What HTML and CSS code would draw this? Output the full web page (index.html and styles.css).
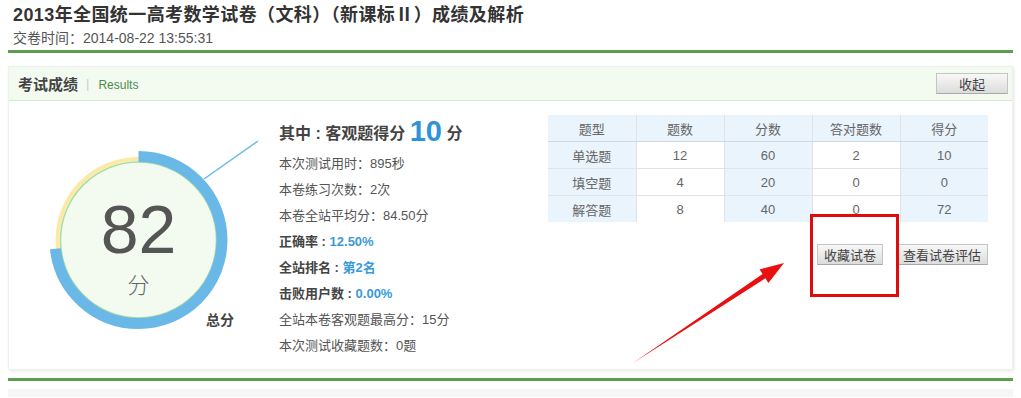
FILE: index.html
```html
<!DOCTYPE html>
<html lang="zh-CN">
<head>
    <meta charset="UTF-8">
    <meta name="viewport" content="width=device-width, initial-scale=1.0">
    <title>成绩及解析</title>
    <link rel="stylesheet" href="styles.css">
</head>
<body>
    <div class="page-head">
        <h1>2013年全国统一高考数学试卷（文科）（新课标Ⅱ）成绩及解析</h1>
        <div class="submit-time">交卷时间：2014-08-22 13:55:31</div>
    </div>

    <div class="panel">
        <div class="panel-title">
            <span class="title-cn">考试成绩</span>
            <span class="title-sep">|</span>
            <span class="title-en">Results</span>
            <button class="btn btn-fold">收起</button>
        </div>

        <div class="panel-body">
            <div class="chart">
                <svg width="262" height="270" viewBox="0 0 262 270">
                    <circle cx="129.5" cy="139" r="81" fill="none" stroke="#fde9a6" stroke-width="4"/>
                    <circle cx="129.5" cy="139" r="78" fill="#f3fbf1" stroke="#a9dea0" stroke-width="1.5"/>
                    <circle cx="129.5" cy="139" r="83.5" fill="none" stroke="#6ab8e8" stroke-width="11"
                            stroke-dasharray="384 600" transform="rotate(-90 129.5 139)"/>
                    <line x1="195" y1="78" x2="249" y2="40" stroke="#6ab8e8" stroke-width="1.5"/>
                </svg>
                <div class="score-num">82</div>
                <div class="score-unit">分</div>
                <div class="score-label">总分</div>
            </div>

            <div class="stats">
                <div class="stats-head">其中 : 客观题得分 <span class="big">10</span> 分</div>
                <div class="stat">本次测试用时：895秒</div>
                <div class="stat">本卷练习次数：2次</div>
                <div class="stat">本卷全站平均分：84.50分</div>
                <div class="stat strong">正确率 : <span class="hl">12.50%</span></div>
                <div class="stat strong">全站排名 : <span class="hl">第2名</span></div>
                <div class="stat strong">击败用户数 : <span class="hl">0.00%</span></div>
                <div class="stat">全站本卷客观题最高分：15分</div>
                <div class="stat">本次测试收藏题数：0题</div>
            </div>

            <div class="summary">
                <table class="score-table">
                    <thead>
                        <tr><th>题型</th><th>题数</th><th>分数</th><th>答对题数</th><th>得分</th></tr>
                    </thead>
                    <tbody>
                        <tr><td>单选题</td><td>12</td><td>60</td><td>2</td><td>10</td></tr>
                        <tr><td>填空题</td><td>4</td><td>20</td><td>0</td><td>0</td></tr>
                        <tr><td>解答题</td><td>8</td><td>40</td><td>0</td><td>72</td></tr>
                    </tbody>
                </table>
                <div class="actions">
                    <button class="btn">收藏试卷</button>
                    <button class="btn">查看试卷评估</button>
                </div>
            </div>
        </div>

        <div class="mark-box"></div>
        <svg class="mark-arrow" width="1005" height="304" viewBox="0 0 1005 304">
            <polygon points="624,296 756.4,211.3 759.4,215.9 775,196 750.6,202.5 753.6,207.1" fill="#e81010"/>
        </svg>
    </div>

    <div class="divider"></div>
    <div class="next-panel"></div>
</body>
</html>
```

FILE: styles.css
```css
body {
    margin: 0;
    padding: 0 8px;
    font-family: "Liberation Sans", "Noto Sans CJK SC", Arial, sans-serif;
    color: #444;
    background: #fff;
    overflow: hidden;
}
.page-head {
    padding: 2px 5px 0;
    border-bottom: 3px solid #5a9e4e;
    height: 48px;
}
.page-head h1 {
    margin: 0;
    font-size: 18px;
    line-height: 26px;
    font-weight: bold;
    letter-spacing: 0.4px;
    color: #333;
}
.submit-time {
    font-size: 14px;
    line-height: 20px;
    color: #555;
}
.panel {
    position: relative;
    margin-top: 13px;
    border: 1px solid #f0f0f0;
    box-shadow: 1px 1px 3px #e6e6e6;
    height: 302px;
}
.panel-title {
    display: flex;
    align-items: center;
    height: 33px;
    padding-left: 9px;
    background: #f3fbf1;
    border-bottom: 1px solid #d5ebd2;
}
.title-cn {
    font-size: 15px;
    font-weight: bold;
    color: #444;
}
.title-sep {
    margin: 0 9px 0 8px;
    font-size: 13px;
    color: #ccc;
}
.title-en {
    font-size: 12px;
    color: #4d8c4d;
    padding-top: 2px;
}
.btn {
    padding: 0 6px;
    height: 21px;
    font-family: "Noto Sans CJK SC", sans-serif;
    font-size: 13px;
    color: #444;
    border: 1px solid #c4c4c4;
    border-bottom-color: #aaa;
    background: linear-gradient(#f8f8f8, #dcdcdc);
    cursor: pointer;
}
.btn-fold {
    margin-left: auto;
    margin-right: 4px;
    width: 72px;
}
.panel-body {
    display: flex;
    height: 268px;
}
.chart {
    position: relative;
    width: 262px;
    flex-shrink: 0;
}
.chart svg {
    display: block;
}
.score-num {
    position: absolute;
    left: 0;
    width: 259px;
    top: 92px;
    text-align: center;
    font-size: 68px;
    line-height: 72px;
    color: #555;
}
.score-unit {
    position: absolute;
    left: 0;
    width: 259px;
    top: 170px;
    text-align: center;
    font-size: 22px;
    line-height: 30px;
    color: #666;
    font-weight: 300;
}
.score-label {
    position: absolute;
    left: 197px;
    top: 208px;
    font-size: 14px;
    font-weight: bold;
    color: #444;
}
.stats {
    width: 270px;
    padding-top: 12px;
    padding-left: 8px;
}
.stats-head {
    font-size: 16px;
    font-weight: bold;
    line-height: 36px;
    height: 38px;
    color: #444;
}
.stats-head .big {
    font-size: 29px;
    color: #2f93d9;
    vertical-align: -2px;
}
.stat {
    font-size: 13px;
    line-height: 26px;
    color: #555;
}
.stat.strong {
    font-weight: bold;
    color: #444;
}
.hl {
    color: #3a9ad9;
}
.summary {
    margin-left: auto;
    margin-right: 24px;
    padding-top: 14px;
    width: 440px;
}
.score-table {
    width: 440px;
    border-collapse: collapse;
    font-size: 13px;
    color: #666;
    table-layout: fixed;
}
.score-table th,
.score-table td {
    height: 26px;
    padding: 0;
    text-align: center;
    font-weight: normal;
    border: 1px solid #dde3ea;
    border-top: 0;
    border-left: 0;
}
.score-table th {
    background: #e9f4fd;
    border-bottom: 1px solid #cfd8e0;
}
.score-table td:nth-child(odd) {
    background: #e9f4fd;
}
.score-table td:last-child,
.score-table th:last-child {
    border-right: 0;
}
.score-table tr:last-child td {
    border-bottom: 0;
}
.actions {
    display: flex;
    justify-content: flex-end;
    gap: 13px;
    margin-top: 22px;
}
.mark-box {
    position: absolute;
    left: 801px;
    top: 147px;
    width: 83px;
    height: 77px;
    border: 3px solid #e00b0b;
}
.mark-arrow {
    position: absolute;
    left: 0;
    top: 0;
}
.divider {
    margin-top: 8px;
    height: 3px;
    background: #5a9e4e;
}
.next-panel {
    margin-top: 8px;
    height: 8px;
    background: #f6f6f6;
}
```
